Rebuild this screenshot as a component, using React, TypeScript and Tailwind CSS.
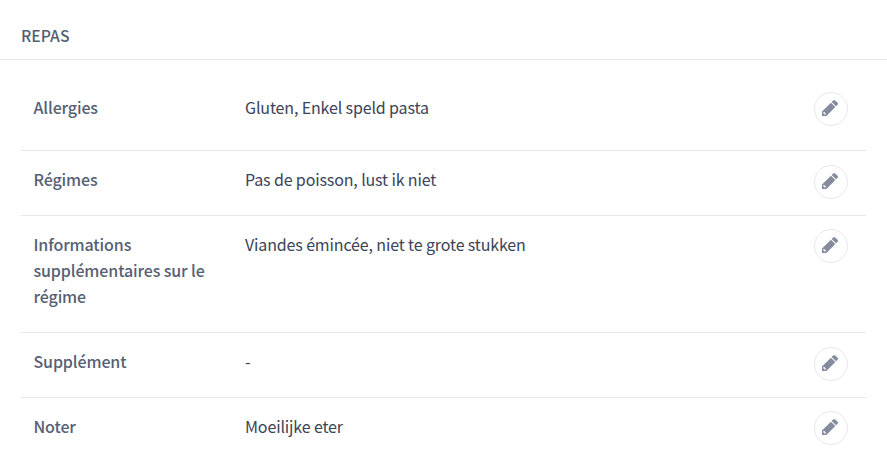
const rows = [
  { label: "Allergies", value: "Gluten, Enkel speld pasta" },
  { label: "Régimes", value: "Pas de poisson, lust ik niet" },
  {
    label: "Informations supplémentaires sur le régime",
    value: "Viandes émincée, niet te grote stukken",
  },
  { label: "Supplément", value: "-" },
  { label: "Noter", value: "Moeilijke eter" },
];

function PencilIcon() {
  return (
    <svg
      className="h-[16px] w-[16px]"
      viewBox="0 149 1515 1515"
      fill="currentColor"
    >
      <path d="M300 1536l80-80-190-190-80 80v70h120v120h70zM846 402l416 416-846 846h-416v-416zM1515 512q0 53-37 90l-150 150-416-416 150-149q36-38 90-38 53 0 91 38l235 234q37 39 37 91z" />
    </svg>
  );
}

export default function App() {
  return (
    <div className="h-[471px] w-full overflow-hidden bg-white font-['Noto_Sans_CJK_JP','Noto_Sans',sans-serif] text-[16px] leading-[26px]">
      <div className="flex h-[60px] items-center border-b border-[#e8e8eb] pt-3 pl-[21px]">
        <h2 className="text-[15.75px] leading-[25px] font-medium text-[#566074]">
          REPAS
        </h2>
      </div>
      <div className="mx-[21px] pt-[19px]">
        {rows.map((row) => (
          <div
            key={row.label}
            className="group flex items-start border-b border-[#e6e8ee] pt-[13px] pr-[18px] pb-[16px] pl-[12.5px] first:pb-[23px] last:border-b-0"
          >
            <div className="mt-0.5 mr-[26.5px] mb-[7px] w-[185px] font-medium tracking-[-0.12px] text-[#566074]">
              {row.label}
            </div>
            <div className="mt-0.5 flex-1 tracking-[-0.135px] text-[#3a4358]">
              {row.value}
            </div>
            <button className="mb-px flex h-[34px] w-[34px] items-center justify-center rounded-full border border-[#e6e8ee] pr-[2px] pb-[2px] text-[#838b9c] group-even:mt-px group-even:mb-0">
              <PencilIcon />
            </button>
          </div>
        ))}
      </div>
    </div>
  );
}
